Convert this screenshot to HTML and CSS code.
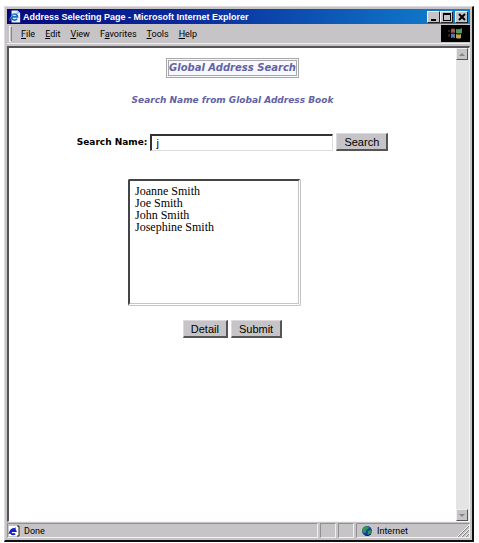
FILE: index.html
```html
<!DOCTYPE html>
<html lang="en">
<head>
  <meta charset="UTF-8">
  <title>Address Selecting Page</title>
  <meta name="viewport" content="width=device-width, initial-scale=1.0">
  <link rel="stylesheet" href="styles.css">
</head>
<body>
  <div class="window">
    <header class="titlebar">
      <svg class="title-icon" viewBox="0 0 14 14" aria-hidden="true">
        <path d="M3 0h7l3 3v11H3z" fill="#eef3fb"/>
        <path d="M10 0v3h3z" fill="#9fb4d8"/>
        <path d="M9.500 9.500A3.500 3.500 0 1 1 10 7.500H4" fill="none" stroke="#1a6fc4" stroke-width="2"/>
        <path d="M1 12C0 9 5 3 11 3" fill="none" stroke="#5aa5e0"/>
      </svg>
      <span class="title">Address Selecting Page - Microsoft Internet Explorer</span>
      <div class="controls">
        <button type="button" aria-label="Minimize"><svg viewBox="0 0 10 10"><path d="M2 7h5v2H2z"/></svg></button>
        <button type="button" aria-label="Maximize"><svg viewBox="0 0 10 10"><path d="M1 1h8v8H1zM2 3v5h6V3z" fill-rule="evenodd"/></svg></button>
        <button type="button" class="close" aria-label="Close"><svg viewBox="0 0 10 10"><path d="M2 2l6 6M8 2L2 8" stroke="#000" stroke-width="2"/></svg></button>
      </div>
    </header>

    <nav class="menubar">
      <span class="grip"></span>
      <button type="button"><u>F</u>ile</button>
      <button type="button"><u>E</u>dit</button>
      <button type="button"><u>V</u>iew</button>
      <button type="button">F<u>a</u>vorites</button>
      <button type="button"><u>T</u>ools</button>
      <button type="button"><u>H</u>elp</button>
      <svg class="throbber" viewBox="0 0 29 17" aria-hidden="true">
        <path d="M0 0h29v17H0z" fill="#000"/>
        <path d="M10 4q2-1 4 0v4q-2-1-4 0z" fill="#a8564a"/>
        <path d="M15 4q3 1 6-1v5q-3 1-6 0z" fill="#4f9a58"/>
        <path d="M10 9q2-1 4 0v4q-2-1-4 0z" fill="#5278b8"/>
        <path d="M15 9q3 1 5 0v4q-2 1-5 0z" fill="#c3a548"/>
        <path d="M8 5v2M8 9v3" stroke="#684044"/>
      </svg>
    </nav>

    <div class="viewport">
      <main class="page">
        <h1>Global Address Search</h1>
        <h2>Search Name from Global Address Book</h2>
        <form class="search">
          <div class="search-row">
            <label for="name">Search Name:</label>
            <input type="text" id="name" name="name" value="j">
            <button type="button" class="btn">Search</button>
          </div>
          <select class="results" name="results" size="10" aria-label="Search results">
            <option>Joanne Smith</option>
            <option>Joe Smith</option>
            <option>John Smith</option>
            <option>Josephine Smith</option>
          </select>
          <div class="actions">
            <button type="button" class="btn">Detail</button>
            <button type="button" class="btn">Submit</button>
          </div>
        </form>
      </main>
      <div class="scrollbar">
        <button type="button" aria-label="Scroll up"><svg viewBox="0 0 9 9"><path d="M1 6h6L4 3z" fill="#858585"/></svg></button>
        <button type="button" aria-label="Scroll down"><svg viewBox="0 0 9 9"><path d="M1 3h6L4 6z" fill="#858585"/></svg></button>
      </div>
    </div>

    <footer class="statusbar">
      <div class="pane message">
        <svg viewBox="0 0 12 12" aria-hidden="true">
          <path d="M1 1h8l2 2v8H1z" fill="#fff"/>
          <path d="M9 1h2v10H9" fill="none" stroke="#222"/>
          <path d="M7 8.500A2.500 2.500 0 1 1 7.500 6H3" fill="none" stroke="#1420c8" stroke-width="2"/>
          <path d="M1 9Q2 4 8 3" fill="none" stroke="#1420c8"/>
        </svg>
        <span>Done</span>
      </div>
      <div class="pane small"></div>
      <div class="pane small"></div>
      <div class="pane zone">
        <svg viewBox="0 0 12 12" aria-hidden="true">
          <circle cx="6" cy="6" r="5" fill="#1747a0"/>
          <path d="M2 3l3-2 3 1-1 2-2 1v2l-2 1-2-2zM7 6l3-1 1 2-2 3-2-1z" fill="#2e9a4c"/>
          <path d="M4 10a5 5 0 0 0 6-1" fill="none" stroke="#10204c"/>
        </svg>
        <span>Internet</span>
        <svg class="resize" viewBox="0 0 12 12" aria-hidden="true">
          <path d="M1 12L12 1M5 12l7-7M9 12l3-3" stroke="#858585"/>
          <path d="M0 12L12 0M4 12l8-8M8 12l4-4" stroke="#f4f4f4"/>
        </svg>
      </div>
    </footer>
  </div>
</body>
</html>
```
FILE: styles.css
```css
*{box-sizing:border-box;margin:0;padding:0;}
body{
  height:100vh;
  padding:6px 5px 1px 4px;
  background:#fff;
  font-family:"Liberation Sans",Arial,sans-serif;
  font-size:9px;
  color:#000;
}
button{font:inherit;color:inherit;}
svg{display:block;}
.window{
  display:flex;
  flex-direction:column;
  height:100%;
  padding:2px;
  background:#c6c4c6;
  border:1px solid #dcdadc;
  border-right:2px solid #111;
  border-bottom:2px solid #111;
}

.titlebar{
  display:flex;
  align-items:center;
  height:15px;
  padding:0 2px;
  background:linear-gradient(90deg,#06087c,#0a2c9c 40%,#1084d0);
  color:#fff;
}
.title-icon{width:12px;height:13px;margin-right:2px;}
.title{flex:1;font-weight:bold;white-space:nowrap;}
.controls{display:flex;}
.controls button{
  display:flex;
  align-items:center;
  justify-content:center;
  width:13px;
  height:12px;
  background:#c6c4c6;
  border:1px solid #f4f4f4;
  border-right-color:#222;
  border-bottom-color:#222;
}
.controls svg{width:10px;height:10px;}
.controls .close{margin-left:2px;}

.menubar{
  display:flex;
  align-items:center;
  height:20px;
  border-bottom:1px solid #eee;
}
.menubar button{
  background:none;
  border:0;
  margin-right:10px;
  font-family:Roboto,Arial,sans-serif;
}
.grip{
  width:3px;
  height:16px;
  margin:0 9px 0 2px;
  border:1px solid #f4f4f4;
  border-right-color:#858585;
}
.menubar .throbber{width:29px;height:17px;margin-left:auto;}

.viewport{
  flex:1;
  display:flex;
  min-height:0;
  margin-top:2px;
  background:#fff;
  border:2px solid #555;
  border-right:1px solid #f4f4f4;
  border-bottom:1px solid #f4f4f4;
}
.page{
  flex:1;
  display:flex;
  flex-direction:column;
  align-items:center;
  padding-top:10px;
}
h1,h2{
  font-family:"DejaVu Sans",Verdana,sans-serif;
  font-size:9px;
  line-height:14px;
  font-style:italic;
  color:#6262a4;
}
h1{
  border:3px double #a8a8a8;
  background:#f8f8ff;
  font-size:10px;
}
h2{margin-top:15px;}
.search{
  display:flex;
  flex-direction:column;
  align-items:center;
  margin-top:26px;
}
.search-row{display:flex;align-items:center;gap:3px;}
label{
  font-family:"DejaVu Sans",Verdana,sans-serif;
  font-weight:bold;
}
input{
  width:183px;
  height:17px;
  padding:0 4px;
  border:2px solid #333;
  border-right:1px solid #ddd;
  border-bottom:1px solid #ddd;
  font-family:"Liberation Sans",Arial,sans-serif;
  font-size:11px;
  outline:none;
}
.btn{
  height:18px;
  padding:0 7px;
  background:#c6c4c6;
  border:1px solid #dcdadc;
  border-right:2px solid #555;
  border-bottom:2px solid #555;
  font-size:11px;
  line-height:14px;
}
.results{
  width:173px;
  height:127px;
  margin:28px 36px 0 0;
  padding:3px;
  border:2px solid #444;
  border-right:3px double #c4c4c4;
  border-bottom:3px double #c4c4c4;
  background:#fff;
  font-family:"Liberation Serif","Times New Roman",serif;
  font-size:12px;
  color:#000;
  outline:none;
  overflow:hidden;
}
.results option{
  display:block;
  height:12px;
  min-height:0;
  padding:0 2px;
  line-height:12px;
}
.actions{display:flex;gap:3px;margin-top:14px;}

.scrollbar{
  display:flex;
  flex-direction:column;
  justify-content:space-between;
  width:13px;
  background:#e4e4e4;
}
.scrollbar button{
  display:flex;
  align-items:center;
  justify-content:center;
  width:12px;
  height:12px;
  background:#c6c4c6;
  border:1px solid #eee;
  border-right-color:#555;
  border-bottom-color:#555;
}
.scrollbar svg{width:9px;height:9px;}

.statusbar{
  display:flex;
  gap:2px;
  height:15px;
  margin-top:1px;
  font-family:Roboto,Arial,sans-serif;
}
.pane{
  display:flex;
  align-items:center;
  gap:4px;
  border:1px solid #909090;
  border-right-color:#f0f0f0;
  border-bottom-color:#f0f0f0;
}
.pane svg{width:12px;height:12px;}
.message{flex:1;}
.small{width:16px;}
.zone{width:114px;padding-left:4px;}
.zone .resize{margin-left:auto;}
```
